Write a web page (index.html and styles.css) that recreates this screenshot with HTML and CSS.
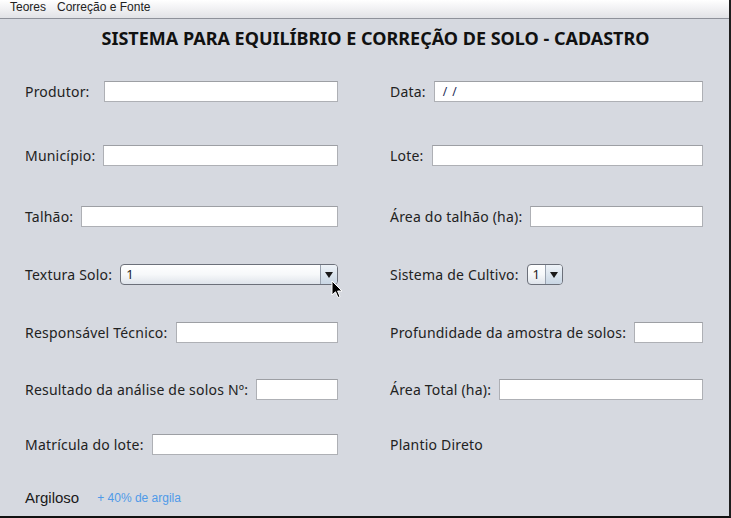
FILE: index.html
```html
<!DOCTYPE html>
<html lang="pt">
<head>
<meta charset="utf-8">
<title>Cadastro</title>
<link rel="stylesheet" href="styles.css">
</head>
<body>
<div class="window">
  <nav class="menubar">
    <span class="menu">Teores</span>
    <span class="menu">Correção e Fonte</span>
  </nav>
  <main class="content">
    <h1 class="title">SISTEMA PARA EQUILÍBRIO E CORREÇÃO DE SOLO - CADASTRO</h1>
    <div class="form">
      <div class="field"><label class="lbl lbl-produtor">Produtor:</label><span class="input"></span></div>
      <div class="field"><label class="lbl">Data:</label><span class="input date"><span class="mask">/ /</span></span></div>

      <div class="field"><label class="lbl">Município:</label><span class="input"></span></div>
      <div class="field"><label class="lbl">Lote:</label><span class="input"></span></div>

      <div class="field"><label class="lbl">Talhão:</label><span class="input"></span></div>
      <div class="field"><label class="lbl">Área do talhão (ha):</label><span class="input"></span></div>

      <div class="field"><label class="lbl">Textura Solo:</label>
        <span class="combo combo-wide"><span class="combo-value">1</span><span class="combo-btn"><span class="tri"></span></span>
          <svg class="cursor" width="13" height="20" viewBox="0 0 13 20"><path d="M1 1 L1 15 L4.5 11.8 L7 17.5 L9 16.6 L6.6 11 L11 11 Z" fill="#000" stroke="#fff" stroke-width="1" stroke-linejoin="round"/></svg>
        </span>
      </div>
      <div class="field"><label class="lbl">Sistema de Cultivo:</label>
        <span class="combo combo-small"><span class="combo-value">1</span><span class="combo-btn"><span class="tri"></span></span></span>
      </div>

      <div class="field"><label class="lbl">Responsável Técnico:</label><span class="input"></span></div>
      <div class="field"><label class="lbl">Profundidade da amostra de solos:</label><span class="input"></span></div>

      <div class="field"><label class="lbl">Resultado da análise de solos Nº:</label><span class="input"></span></div>
      <div class="field"><label class="lbl">Área Total (ha):</label><span class="input"></span></div>

      <div class="field"><label class="lbl">Matrícula do lote:</label><span class="input"></span></div>
      <div class="field"><span class="lbl">Plantio Direto</span></div>

      <div class="field"><span class="soil">Argiloso</span><span class="hint">+ 40% de argila</span></div>
      <div class="field"></div>
    </div>
  </main>
</div>
</body>
</html>
```

FILE: styles.css
```css
* { box-sizing: border-box; }
html, body { margin: 0; padding: 0; }
body {
  width: 731px;
  height: 518px;
  overflow: hidden;
  background: #d6d9e0;
}
.window {
  width: 731px;
  height: 518px;
  border-right: 2px solid #1e1e1e;
  border-bottom: 2px solid #111;
  background: #d6d9e0;
  display: flex;
  flex-direction: column;
}
.menubar {
  height: 19px;
  flex: none;
  display: flex;
  align-items: flex-start;
  gap: 11px;
  padding: 0 0 0 10px;
  background: linear-gradient(#ffffff, #f2f2f4 45%, #e1e2e6);
  border-bottom: 1px solid #8e919a;
  font-family: "Liberation Sans", Arial, sans-serif;
  font-size: 12px;
  color: #222;
  line-height: 15px;
}
.content {
  flex: 1;
  padding: 0 28px 0 25px;
}
.title {
  margin: 7px 0 0 0;
  padding-left: 25px;
  text-align: center;
  font-family: "Noto Sans", "Open Sans", sans-serif;
  font-weight: 700;
  font-size: 18px;
  line-height: 24px;
  color: #111;
}
.form {
  margin-top: 31px;
  display: grid;
  grid-template-columns: 313px 313px;
  column-gap: 52px;
  grid-template-rows: 64px 61px 58px 58px 57px 55px 53px 21px;
}
.field {
  display: flex;
  align-items: center;
  gap: 8px;
  height: 21px;
  font-family: "Noto Sans", "Open Sans", sans-serif;
  font-size: 14px;
  letter-spacing: 0.2px;
  color: #222;
}
.lbl { white-space: nowrap; flex: none; }
.lbl-produtor { width: 71px; }
.input {
  flex: 1;
  height: 21px;
  background: #fff;
  border: 1px solid #aeb0b5;
  border-top-color: #9d9fa4;
  display: flex;
  align-items: center;
}
.date .mask {
  padding-left: 8px;
  font-size: 12px;
  color: #1a2a55;
  letter-spacing: 0;
  word-spacing: 2px;
  white-space: pre;
}
.combo {
  position: relative;
  height: 21px;
  display: flex;
  align-items: stretch;
  border: 1px solid #6c707a;
  border-radius: 4px;
  background: linear-gradient(#ffffff, #f6f8fa 50%, #dfe4eb);
}
.combo-wide { flex: 1; }
.combo-small { width: 36px; flex: none; }
.combo-value {
  flex: 1;
  padding-left: 5px;
  line-height: 19px;
  font-size: 13px;
  color: #222;
}
.combo-btn {
  width: 17px;
  flex: none;
  border-left: 1px solid #9aa3b0;
  border-radius: 0 3px 3px 0;
  background: linear-gradient(#eef3f8, #c9d6e4);
  display: flex;
  align-items: center;
  justify-content: center;
}
.tri {
  width: 0;
  height: 0;
  border-left: 4px solid transparent;
  border-right: 4px solid transparent;
  border-top: 6px solid #1a1a1a;
}
.cursor {
  position: absolute;
  right: -7px;
  top: 15px;
}
.soil {
  font-family: "Liberation Sans", Arial, sans-serif;
  font-size: 15px;
  letter-spacing: 0;
  color: #1a1a1a;
  margin-right: 10px;
}
.hint {
  font-family: "Liberation Sans", Arial, sans-serif;
  font-size: 12px;
  letter-spacing: 0;
  color: #4f9ae8;
}
```
